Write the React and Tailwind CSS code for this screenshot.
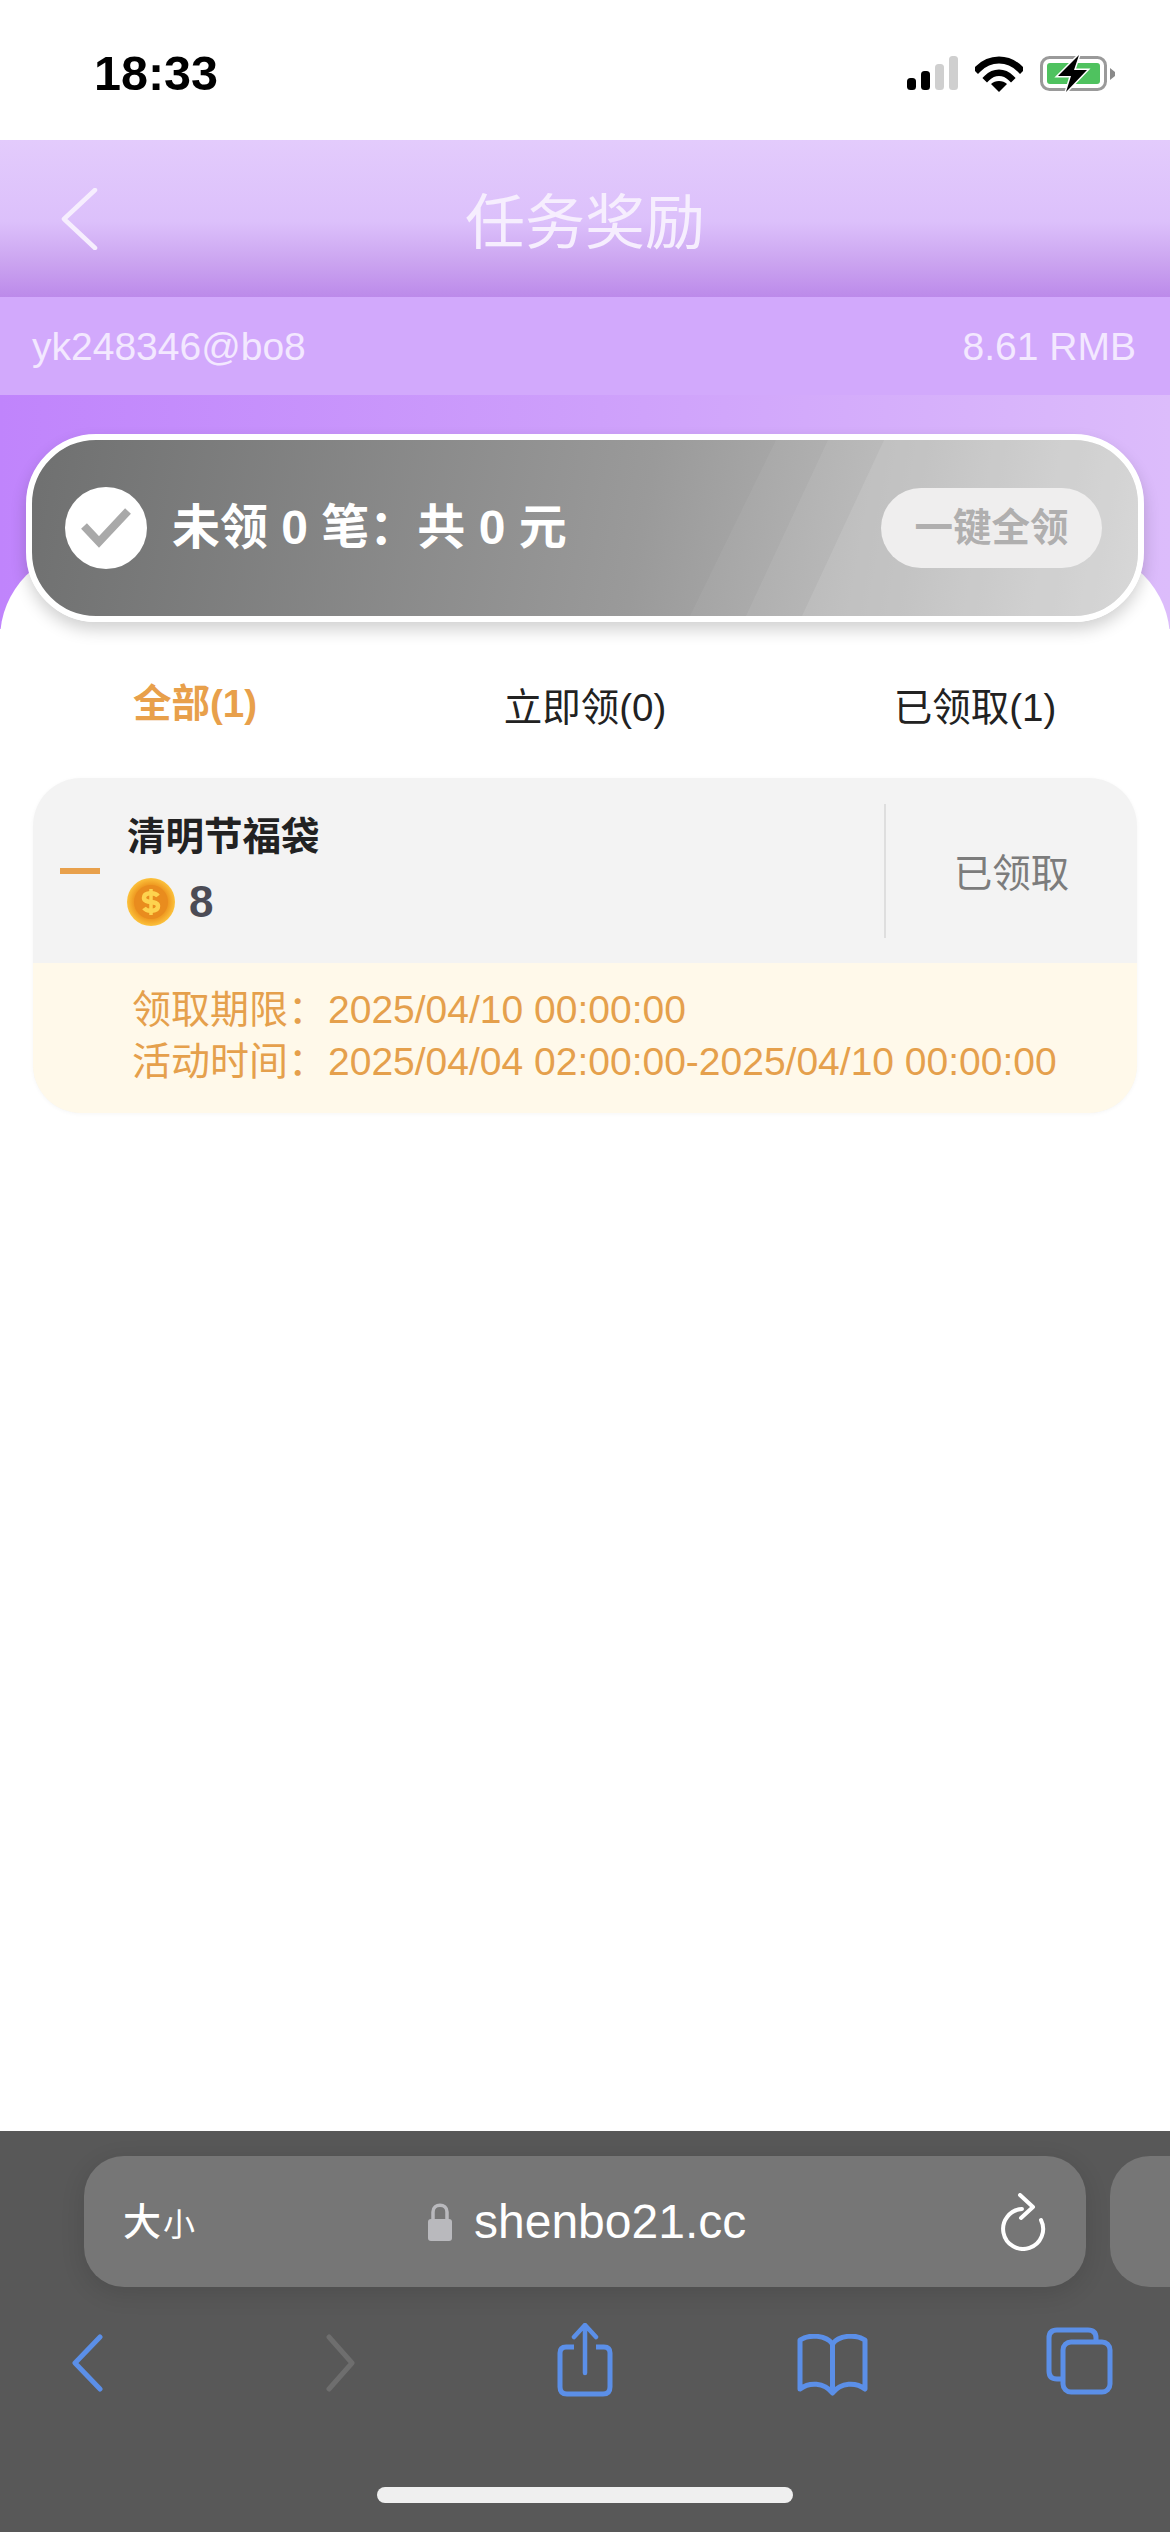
const cjk = { fontFamily: '"Liberation Sans", "Noto Sans CJK SC", sans-serif' };

function StatusIcons() {
    return (
        <div className="flex items-center">
            <svg width="51" height="34" viewBox="0 0 51 34">
                <rect x="0" y="22" width="9" height="12" rx="3.5" fill="#000" />
                <rect x="14" y="15" width="9" height="19" rx="3.5" fill="#000" />
                <rect x="28" y="8" width="9" height="26" rx="3.5" fill="#cfcfcf" />
                <rect x="42" y="0" width="9" height="34" rx="3.5" fill="#cfcfcf" />
            </svg>
            <svg className="ml-[17px]" width="48" height="37" viewBox="0 0 48 37">
                <path d="M3 14 C15 2 33 2 45 14" fill="none" stroke="#000" strokeWidth="7" strokeLinecap="square" />
                <path d="M12 23 C19 16 29 16 36 23" fill="none" stroke="#000" strokeWidth="6.5" strokeLinecap="square" />
                <path d="M24 37 L16 29 C20 25 28 25 32 29 Z" fill="#000" />
            </svg>
            <svg className="ml-[17px]" width="75" height="37" viewBox="0 0 75 37">
                <rect x="1.5" y="2.5" width="64" height="32" rx="8" fill="none" stroke="#9a9a9a" strokeWidth="3" />
                <path d="M70 13 L75 17 L75 21 L70 25 Z" fill="#8a8a8a" />
                <rect x="7" y="8" width="53" height="21" rx="3" fill="#4fc25f" />
                <path d="M39 0 L18 21 L31 21 L26 37 L47 15 L34 15 Z" fill="#000" stroke="#fff" strokeWidth="3" paintOrder="stroke" />
            </svg>
        </div>
    );
}

function Coin() {
    return (
        <svg width="48" height="48" viewBox="0 0 48 48">
            <defs>
                <radialGradient id="coin" cx="50%" cy="50%" r="50%">
                    <stop offset="0%" stopColor="#e8861c" />
                    <stop offset="70%" stopColor="#ee9820" />
                    <stop offset="100%" stopColor="#fcc23c" />
                </radialGradient>
            </defs>
            <circle cx="24" cy="24" r="24" fill="url(#coin)" />
            <circle cx="24" cy="24" r="17" fill="#e98c1e" />
            <path d="M31 18 C28 14 17 14 17 20 C17 26 31 22 31 28 C31 34 20 34 17 30" fill="none" stroke="#fdd34f" strokeWidth="4.5" />
            <path d="M24 11 V37" stroke="#fdd34f" strokeWidth="3.5" />
        </svg>
    );
}

function Toolbar() {
    return (
        <div className="mt-[42px] flex items-center pl-[71px]">
            <svg width="32" height="58" viewBox="0 0 32 58">
                <path d="M29 3 L4 29 L29 55" fill="none" stroke="#5b8fe8" strokeWidth="5" strokeLinecap="round" strokeLinejoin="round" />
            </svg>
            <svg className="ml-[223px]" width="29" height="58" viewBox="0 0 29 58">
                <path d="M3 3 L26 29 L3 55" fill="none" stroke="#6e6e6e" strokeWidth="5" strokeLinecap="round" strokeLinejoin="round" />
            </svg>
            <svg className="ml-[202px] -mt-[6px]" width="56" height="74" viewBox="0 0 56 74">
                <path d="M17 24 H9 Q3 24 3 30 V64 Q3 71 10 71 H46 Q53 71 53 64 V30 Q53 24 47 24 H39" fill="none" stroke="#5b8fe8" strokeWidth="5" />
                <path d="M28 50 V3 M17 14 L28 2 L39 14" fill="none" stroke="#5b8fe8" strokeWidth="4.5" strokeLinecap="round" />
            </svg>
            <svg className="ml-[184px] mt-[3px]" width="71" height="62" viewBox="0 0 71 62">
                <path d="M35.5 10 C29 1 12 0 3 6 V55 C12 48 27 48 35.5 59 C44 48 59 48 68 55 V6 C59 0 42 1 35.5 10 Z M35.5 10 V59" fill="none" stroke="#5b8fe8" strokeWidth="5" strokeLinejoin="round" />
            </svg>
            <svg className="ml-[178px] -mt-[4px]" width="67" height="68" viewBox="0 0 67 68">
                <path d="M50 14 V11 Q50 3 42 3 H11 Q3 3 3 11 V44 Q3 52 11 52 H16" fill="none" stroke="#5b8fe8" strokeWidth="5" />
                <rect x="17" y="15" width="47" height="50" rx="8" fill="none" stroke="#5b8fe8" strokeWidth="5" />
            </svg>
        </div>
    );
}

export default function App() {
    return (
        <div className="w-[1170px] h-[2532px] flex flex-col overflow-hidden bg-white" style={cjk}>
            <div className="h-[140px] flex items-center justify-between pl-[94px] pr-[55px] pt-[6px]">
                <span className="text-[48.5px] font-bold text-black leading-none">18:33</span>
                <StatusIcons />
            </div>

            <div className="h-[157px] flex items-center relative bg-[linear-gradient(180deg,#e3cbfc_0%,#dcc0fb_52%,#cba4f0_78%,#bc8aea_100%)]">
                <svg className="ml-[60px]" width="38" height="62" viewBox="0 0 38 62">
                    <path d="M35 2 L4 31 L35 60" fill="none" stroke="#f6eefe" strokeWidth="4.5" strokeLinecap="round" strokeLinejoin="round" />
                </svg>
                <h1 className="flex-1 text-center text-[60px] font-normal text-[#f6eefe] pr-[98px] pt-[11px] leading-none">任务奖励</h1>
            </div>

            <div className="h-[98px] flex items-center justify-between pl-[32px] pr-[34px] pt-[3px] text-[39px] text-[#f3e8ff] bg-[#d2a9fc]">
                <span>yk248346@bo8</span>
                <span>8.61 RMB</span>
            </div>

            <div className="h-[234px] shrink-0 pt-[39px] px-[26px] bg-[linear-gradient(90deg,#c084fc_0%,#cfa2fb_55%,#dcbcfb_100%)]">
                <div className="relative z-10 h-[188px] rounded-[70px] border-[6px] border-white overflow-hidden flex items-center pl-[33px] pr-[36px] bg-[linear-gradient(100deg,#6f7070_0%,#9a9a9a_55%,#cfcfcf_100%)] shadow-[0_8px_16px_rgba(0,0,0,0.18)]">
                    <svg className="absolute inset-0" width="1106" height="176" viewBox="0 0 1106 176">
                        <path d="M744 0 H1106 V176 H658 Z" fill="#ffffff" fillOpacity="0.05" />
                        <path d="M796 0 H1106 V176 H714 Z" fill="#ffffff" fillOpacity="0.07" />
                        <path d="M852 0 H1106 V176 H770 Z" fill="#ffffff" fillOpacity="0.1" />
                    </svg>
                    <div className="relative w-[82px] h-[82px] rounded-full bg-white flex items-center justify-center">
                        <svg width="50" height="40" viewBox="0 0 50 40">
                            <path d="M3 18 L18 34 L47 3" fill="none" stroke="#a9a9a9" strokeWidth="8" />
                        </svg>
                    </div>
                    <span className="relative ml-[25px] text-[48px] font-bold text-white whitespace-pre">未领 0 笔：共 0 元</span>
                    <button className="relative ml-auto w-[221px] h-[80px] rounded-[40px] bg-[#efeeee] text-[38.5px] font-bold text-[#b0afaf]">一键全领</button>
                </div>
            </div>

            <div className="relative flex-1 -mt-[80px] bg-white rounded-t-[90px] pt-[129px] px-[33px] min-h-0">
                <div className="relative z-10 -mx-[33px] grid grid-cols-3 text-center text-[38.5px] leading-[60px] text-[#222]">
                    <span className="font-bold text-[#e8a04b] -mt-[4px]">全部(1)</span>
                    <span>立即领(0)</span>
                    <span>已领取(1)</span>
                </div>

                <div className="mt-[40px] rounded-[48px] overflow-hidden bg-[#f3f3f3] shadow-[0_1px_4px_rgba(0,0,0,0.04)]">
                    <div className="h-[185px] relative flex items-center">
                        <div className="ml-[27px] w-[40px] h-[6px] bg-[#e8a04b]" />
                        <div className="ml-[27px] flex-1 pb-[7px]">
                            <p className="text-[38.5px] font-bold leading-[56px] text-[#222]">清明节福袋</p>
                            <div className="flex items-center mt-[13px]">
                                <Coin />
                                <span className="ml-[14px] text-[44px] font-bold leading-[48px] text-[#4b4b55]">8</span>
                            </div>
                        </div>
                        <div className="w-[253px] h-[134px] pt-[6px] border-l-2 border-[#dedede] flex items-center justify-center text-[38.5px] text-[#7c7c7c]">已领取</div>
                    </div>
                    <div className="h-[150px] bg-[#fff9ea] pt-[21px] pl-[99px] text-[39px] leading-[52px] text-[#e5a04c]">
                        <p>领取期限：<span className="ml-[1px]">2025/04/10 00:00:00</span></p>
                        <p>活动时间：<span className="ml-[1px]">2025/04/04 02:00:00-2025/04/10 00:00:00</span></p>
                    </div>
                </div>
            </div>

            <div className="h-[401px] shrink-0 bg-[#585858] pt-[25px]">
                <div className="flex">
                    <div className="ml-[84px] w-[1002px] h-[131px] shrink-0 rounded-[40px] bg-[#767676] flex items-center relative shadow-[0_6px_24px_rgba(0,0,0,0.12)]">
                        <span className="ml-[39px] text-white text-[38px] font-medium leading-none">大</span>
                        <span className="ml-[2px] text-white text-[32px] leading-none mt-[6px]">小</span>
                        <svg className="ml-[232px]" width="26" height="40" viewBox="0 0 26 40">
                            <path d="M6 20 V10 C6 1 20 1 20 10 V20" fill="none" stroke="#b9b9bd" strokeWidth="3.5" />
                            <rect x="1" y="17" width="24" height="22" rx="3" fill="#b9b9bd" />
                        </svg>
                        <span className="ml-[21px] text-white text-[48px] leading-none">shenbo21.cc</span>
                        <svg className="ml-auto mr-[40px]" width="46" height="58" viewBox="0 0 46 58">
                            <path d="M22 16 A20 20 0 1 0 41 27" fill="none" stroke="#fff" strokeWidth="4" strokeLinecap="round" />
                            <path d="M20 2 L33 14 L21 25" fill="none" stroke="#fff" strokeWidth="4" strokeLinecap="round" strokeLinejoin="round" />
                        </svg>
                    </div>
                    <div className="ml-[24px] w-[200px] h-[131px] shrink-0 rounded-[40px] bg-[#767676]" />
                </div>
                <Toolbar />
                <div className="mt-[90px] mx-auto w-[416px] h-[16px] rounded-full bg-[#efefef]" />
            </div>
        </div>
    );
}
